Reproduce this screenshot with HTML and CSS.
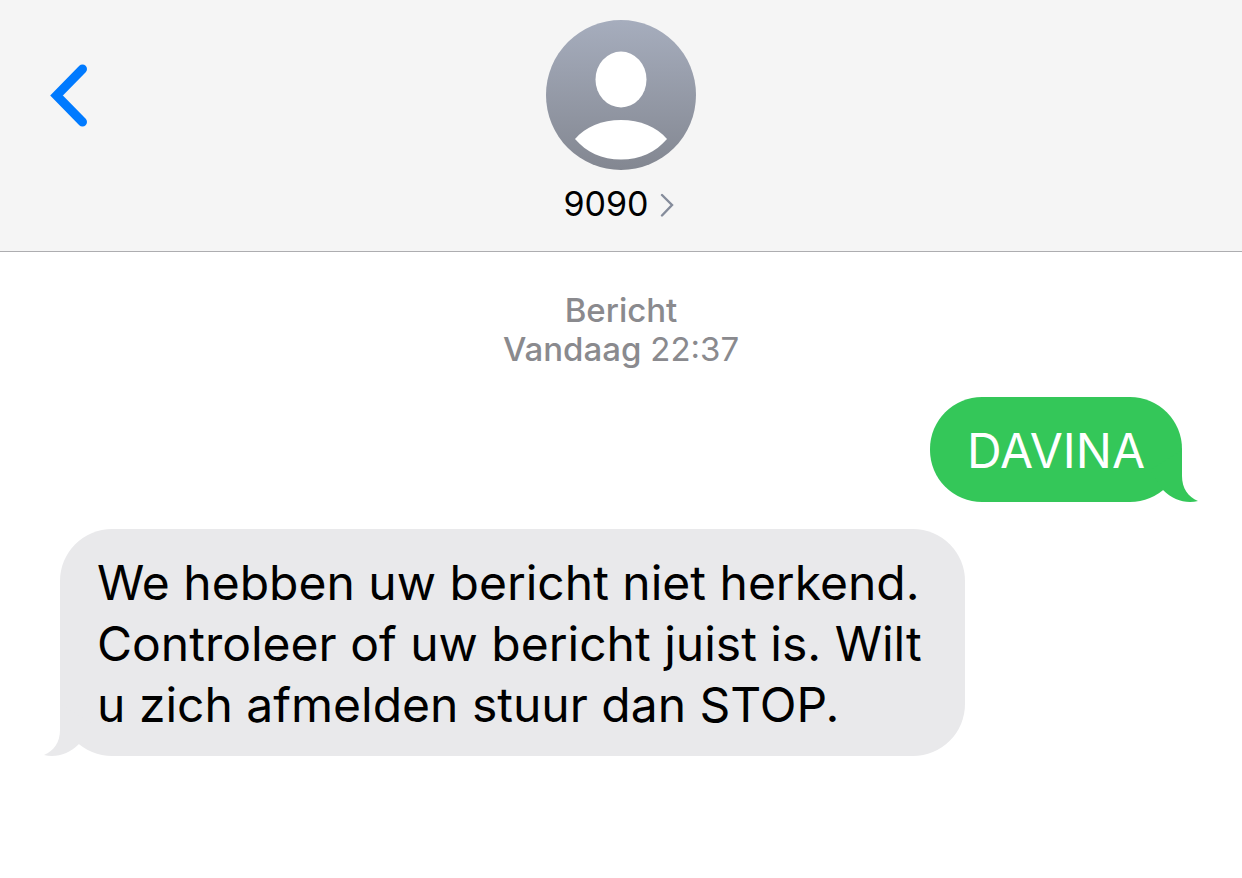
FILE: index.html
```
<!DOCTYPE html>
<html lang="nl">
<head>
    <meta charset="UTF-8">
    <meta name="viewport" content="width=device-width, initial-scale=1.0">
    <title>9090</title>
    <link rel="stylesheet" href="styles.css">
</head>
<body>
    <header class="chat-header">
        <button class="back-btn" type="button" aria-label="Terug">
            <svg width="40" height="66" viewBox="0 0 40 66" fill="none">
                <path d="M34.5 7L8.5 33.5L34.5 60" stroke="#007aff" stroke-width="9" stroke-linecap="round" stroke-linejoin="miter"/>
            </svg>
        </button>

        <button class="contact" type="button">
            <svg class="avatar" viewBox="0 0 150 150" aria-hidden="true">
                <defs>
                    <linearGradient id="avatarFill" x1="0" y1="0" x2="0" y2="1">
                        <stop offset="0" stop-color="#a6adbd"/>
                        <stop offset="1" stop-color="#838791"/>
                    </linearGradient>
                </defs>
                <circle cx="75" cy="75" r="75" fill="url(#avatarFill)"/>
                <ellipse cx="75" cy="59.5" rx="25.5" ry="28" fill="#fff"/>
                <path d="M29 119C39 107 56 100 75 100C94 100 111 107 121 119C110 132 94 139.5 75 139.5C56 139.5 40 132 29 119Z" fill="#fff"/>
            </svg>
            <span class="contact-name">
                9090
                <svg width="14" height="26" viewBox="0 0 14 26" fill="none">
                    <path d="M2 4L12 14L2 24.5" stroke="#858c9b" stroke-width="2.4" stroke-linecap="round"/>
                </svg>
            </span>
        </button>
    </header>

    <main class="conversation">
        <p class="timestamp">
            Bericht<br>
            Vandaag <time>22:37</time>
        </p>

        <div class="bubble sent">
            DAVINA
            <svg class="tail" width="48" height="52" viewBox="0 0 48 52" aria-hidden="true">
                <path d="M32 0V26C32 38 38 47 48 51C36 54 23 50 13 40L0 20Z"/>
            </svg>
        </div>

        <div class="bubble received">
            We hebben uw bericht niet herkend. Controleer of uw bericht juist is. Wilt u zich afmelden stuur dan STOP.
            <svg class="tail" width="48" height="52" viewBox="0 0 48 52" aria-hidden="true">
                <path d="M16 0V26C16 38 10 47 0 51C12 54 25 50 35 40L48 20Z"/>
            </svg>
        </div>
    </main>
</body>
</html>
```
FILE: styles.css
```
* {
    margin: 0;
    padding: 0;
    box-sizing: border-box;
}

body {
    font-family: Inter, 'Liberation Sans', Arial, sans-serif;
    background: #fff;
    color: #000;
}

button {
    font: inherit;
    color: inherit;
    background: none;
    border: none;
    cursor: pointer;
}

.chat-header {
    display: grid;
    grid-template-columns: 1fr auto 1fr;
    align-items: start;
    padding: 20px 48px 27px;
    background: #f5f5f5;
    border-bottom: 1px solid #adadb0;
}

.back-btn {
    justify-self: start;
    padding-top: 42px;
}

.back-btn svg {
    display: block;
}

.contact {
    display: flex;
    flex-direction: column;
    align-items: center;
    gap: 14px;
}

.avatar {
    width: 150px;
    height: 150px;
}

.contact-name {
    display: flex;
    align-items: center;
    gap: 11px;
    padding-right: 5px;
    font-size: 34px;
    line-height: 40px;
}

.conversation {
    display: flex;
    flex-direction: column;
    padding: 39px 60px;
}

.timestamp {
    margin-bottom: 28px;
    text-align: center;
    font-size: 33px;
    font-weight: 500;
    line-height: 39px;
    color: #8a8a8e;
}

.timestamp time {
    font-weight: 400;
}

.bubble {
    position: relative;
    max-width: 905px;
    padding: 23px 37px 21px;
    border-radius: 52px;
    font-size: 48px;
    line-height: 61px;
}

.sent {
    align-self: flex-end;
    background: #34c759;
    color: #fff;
}

.received {
    align-self: flex-start;
    margin-top: 27px;
    background: #e9e9eb;
}

/* tail hangs past the bottom corner of the bubble */
.tail {
    position: absolute;
    bottom: 0;
}

.sent .tail {
    right: -16px;
    fill: #34c759;
}

.received .tail {
    left: -16px;
    fill: #e9e9eb;
}
```
